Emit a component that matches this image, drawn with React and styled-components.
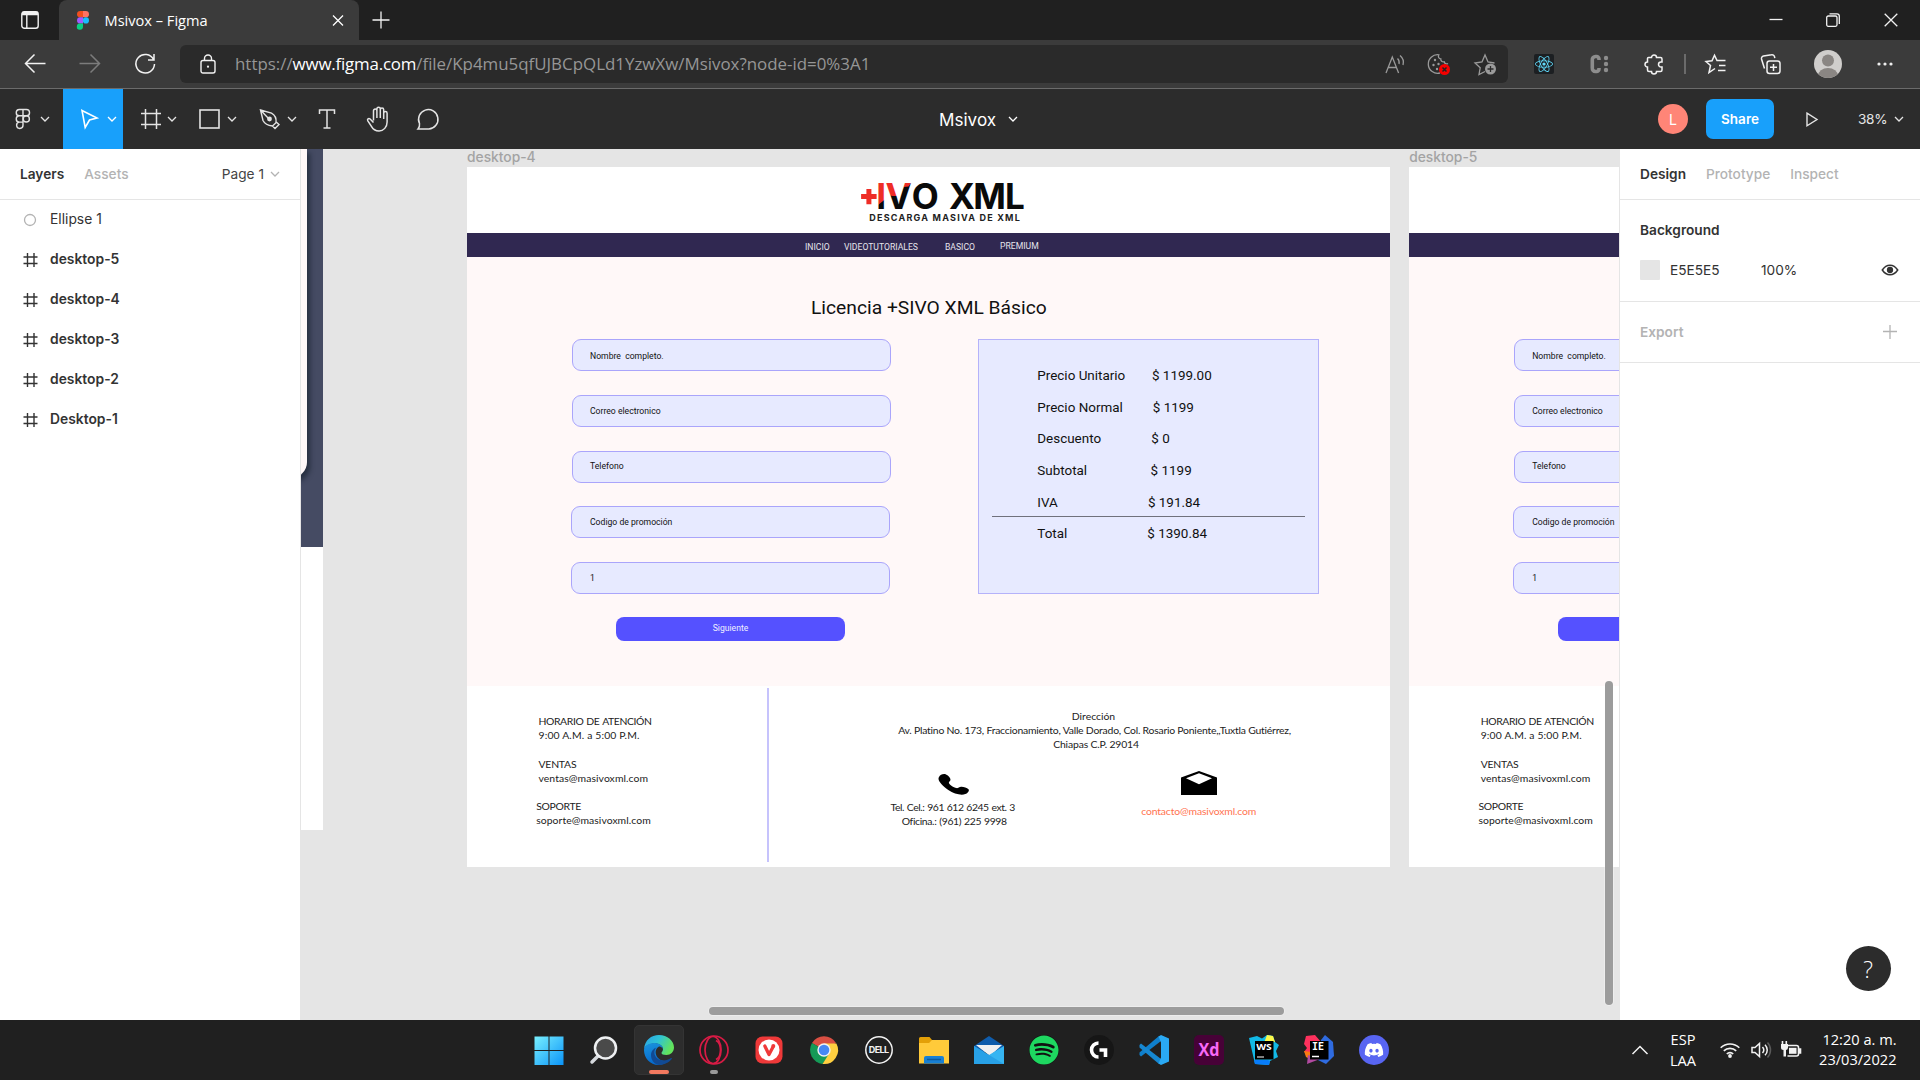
import React from "react";
import styled, { createGlobalStyle } from "styled-components";
import { FaSpotify, FaDiscord, FaReact } from "react-icons/fa";

const UI = `"Open Sans", "Noto Sans", sans-serif`;
const INTER = `Inter, "Liberation Sans", sans-serif`;

const Global = createGlobalStyle`
  * { box-sizing: border-box; }
  html, body { margin: 0; padding: 0; background: #202020; overflow: hidden; }
  svg { display: block; flex: none; overflow: visible; }
`;

const Screen = styled.div`
  width: 1920px;
  height: 1080px;
  display: flex;
  flex-direction: column;
  overflow: hidden;
  font-family: ${INTER};
`;

/* ---------- browser chrome ---------- */
const TitleBar = styled.header`
  height: 40px;
  flex: none;
  display: flex;
  padding-right: 1px;
  background: #202020;
`;
const Slot = styled.div`
  width: ${(p) => p.$w}px;
  flex: none;
  display: flex;
  align-items: center;
  justify-content: center;
  color: ${(p) => p.$c || "#f2f2f2"};
`;
const Tab = styled.div`
  width: 300px;
  padding: 0 15px 0 18px;
  display: flex;
  align-items: center;
  background: #3b3b3b;
  border-radius: 8px 8px 0 0;
  color: #fff;
  font: 14.6px ${UI};
`;
const TabTitle = styled.span`
  flex: 1;
  margin: -1px 0 0 15.5px;
`;
const Spacer = styled.div`
  flex: 1;
`;
const AddressRow = styled.div`
  height: 49px;
  flex: none;
  display: flex;
  padding: 5px 0 5px;
  background: #3b3b3b;
  border-bottom: 1px solid #6b6b6b;
`;
const UrlBox = styled.div`
  width: 1328px;
  height: 38px;
  flex: none;
  display: flex;
  align-items: center;
  border-radius: 6px;
  background: #2a2a2a;
`;
const Url = styled.div`
  flex: 1;
  padding-bottom: 2px;
  color: #969696;
  font: 16.9px ${UI};
  white-space: nowrap;
  b {
    font-weight: 400;
    letter-spacing: -0.2px;
    color: #fff;
  }
`;
const Divider = styled.div`
  width: 1.5px;
  height: 20px;
  background: #6b6b6b;
`;
const ReactTile = styled.div`
  width: 20px;
  height: 20px;
  display: grid;
  place-items: center;
  border-radius: 2px;
  background: #1c1f22;
  color: #61dafb;
  font-size: 18px;
`;

/* ---------- editor toolbar ---------- */
const ToolBar = styled.div`
  height: 60px;
  flex: none;
  display: flex;
  align-items: center;
  background: #2c2c2c;
  color: #e4e4e4;
`;
const Tool = styled.div`
  width: ${(p) => p.$w || 60}px;
  height: 60px;
  padding-left: ${(p) => p.$pl ?? 15}px;
  display: flex;
  align-items: center;
  gap: 5px;
  background: ${(p) => (p.$on ? "#18a0fb" : "transparent")};
`;
const FileName = styled.div`
  width: 90px;
  margin-left: 487px;
  display: flex;
  align-items: center;
  gap: 11.5px;
  color: #fff;
  font-size: 17.1px;
`;
const UserDot = styled.div`
  width: 30px;
  height: 30px;
  display: grid;
  place-items: center;
  border-radius: 50%;
  background: #ff8577;
  color: #fff;
  font-size: 14px;
`;
const Share = styled.div`
  width: 68px;
  height: 40px;
  margin: 0 32px 0 18px;
  display: grid;
  place-items: center;
  padding-bottom: 1px;
  border-radius: 7px;
  background: #18a0fb;
  color: #fff;
  font-size: 13.5px;
  font-weight: 600;
`;
const Zoom = styled.div`
  width: 62px;
  margin-left: 40px;
  display: flex;
  align-items: center;
  gap: 7px;
  font-size: 13.6px;
  letter-spacing: -0.3px;
`;

/* ---------- workspace ---------- */
const Work = styled.main`
  height: 871px;
  flex: none;
  display: flex;
`;
const Left = styled.aside`
  width: 301px;
  flex: none;
  background: #fff;
  border-right: 1px solid #e5e5e5;
`;
const PanelTabs = styled.div`
  height: 51px;
  padding: 0 20px;
  display: flex;
  align-items: center;
  gap: 20px;
  border-bottom: 1px solid #e5e5e5;
  font-size: 13.7px;
`;
const PTab = styled.span`
  color: ${(p) => (p.$on ? "#333" : "#b3b3b3")};
  font-weight: ${(p) => (p.$on ? 600 : 500)};
`;
const PageSel = styled.span`
  margin-left: auto;
  display: flex;
  align-items: center;
  gap: 6px;
  color: #444;
`;
const Layers = styled.div`
  margin-top: -1px;
`;
const Layer = styled.div`
  height: 40px;
  padding-left: 22px;
  display: flex;
  align-items: center;
  gap: 12px;
  color: #333;
  font-size: 13.85px;
  font-weight: ${(p) => (p.$frame ? 600 : 400)};
`;
const LayerIcon = styled.span`
  width: 16px;
  display: flex;
  justify-content: center;
  padding-top: 1px;
`;
const Canvas = styled.section`
  position: relative;
  width: 1318px;
  flex: none;
  overflow: hidden;
  background: #e5e5e5;
`;
const Right = styled.aside`
  position: relative;
  flex: 1;
  background: #fff;
  border-left: 1px solid #e5e5e5;
`;
const Section = styled.div`
  height: ${(p) => p.$h}px;
  padding: 0 ${(p) => (p.$dim ? 24 : 22)}px ${(p) => (p.$dim ? 0 : 1)}px 20px;
  display: flex;
  flex-direction: column;
  justify-content: center;
  gap: 20px;
  border-bottom: 1px solid #e5e5e5;
  font-size: 13.7px;
`;
const PropRow = styled.div`
  height: 20px;
  display: flex;
  align-items: center;
  color: #333;
`;
const SectionName = styled.span`
  flex: 1;
  font-weight: 600;
  color: ${(p) => (p.$dim ? "#b3b3b3" : "#333")};
`;
const Swatch = styled.span`
  width: 20px;
  height: 20px;
  margin-right: 10px;
  border-radius: 1px;
  background: #e5e5e5;
`;
const Value = styled.span`
  width: ${(p) => p.$w}px;
`;
const Help = styled.div`
  position: absolute;
  right: 30.5px;
  bottom: 29px;
  width: 45px;
  height: 45px;
  display: grid;
  place-items: center;
  border-radius: 50%;
  background: #2c2c2c;
  color: #fff;
  font: 300 23px ${UI};
`;

/* ---------- canvas content ---------- */
const Frame = styled.div`
  position: absolute;
  left: ${(p) => p.$x}px;
  top: 0;
  width: 923px;
`;
const FrameLabel = styled.div`
  height: 18px;
  line-height: 16px;
  color: #a3a3a3;
  font-size: 13.8px;
  font-weight: 500;
`;
const Board = styled.div`
  height: 700px;
  background: #fff;
  color: #111;
  font-family: Roboto, sans-serif;
`;
const BoardHead = styled.div`
  height: 65.5px;
  padding: 11px 0 0 388px;
`;
const BoardNav = styled.div`
  height: 24px;
  padding-left: 338px;
  display: grid;
  grid-template-columns: 39px 101px 55px auto;
  line-height: 28px;
  background: #302851;
  color: #e6e4ec;
  font-size: 8.65px;
`;
const NavItem = styled.span`
  margin-top: ${(p) => (p.$up ? -1 : 0)}px;
`;
const BoardBody = styled.div`
  height: 429.5px;
  padding-top: 36px;
  background: #fff8f8;
`;
const BoardTitle = styled.h1`
  margin: 0 0 16.5px 344px;
  font-size: 19.24px;
  font-weight: 400;
  line-height: 30px;
  white-space: nowrap;
`;
const Columns = styled.div`
  display: flex;
  padding-left: 105px;
`;
const Form = styled.div`
  width: 319px;
  display: flex;
  flex-direction: column;
  gap: 23.8px;
`;
const Field = styled.div`
  height: 32px;
  margin: 0 ${(p) => (p.$shift ? 1 : 0)}px 0 ${(p) => (p.$shift ? -1 : 0)}px;
  padding-left: ${(p) => (p.$shift ? 18 : 17)}px;
  line-height: ${(p) => p.$lh}px;
  background: #e7eaff;
  border: 1px solid #aaa5fb;
  border-radius: 9px;
  font-size: 8.65px;
  white-space: pre;
`;
const Next = styled.div`
  width: 229px;
  height: 24px;
  margin: -0.5px 0 0 44px;
  border-radius: 8px;
  background: #5551ff;
  color: #f0f0ff;
  font-size: 8.65px;
  line-height: 23px;
  text-align: center;
`;
const Prices = styled.div`
  width: 341px;
  height: 255.3px;
  margin-left: 87.3px;
  padding: 20px 13px;
  background: #e7eaff;
  border: 1px solid #b5b2fa;
`;
const Price = styled.div`
  height: 31.7px;
  padding-left: 45px;
  display: flex;
  line-height: 32.6px;
  font-size: 13.45px;
`;
const PriceName = styled.span`
  width: ${(p) => p.$w}px;
`;
const Rule = styled.div`
  height: 1px;
  margin: -2px 0 1px;
  background: #70717c;
`;
const BoardFoot = styled.div`
  height: 181px;
  display: flex;
  color: #222;
  font-family: Lato, sans-serif;
  font-size: 10.4px;
`;
const Hours = styled.div`
  width: 301.5px;
  height: 174px;
  margin-top: 2px;
  padding: 26px 0 0 71.5px;
  display: flex;
  flex-direction: column;
  gap: 13.7px;
  border-right: 2px solid #c6c3fc;
  line-height: 14.4px;
`;
const HourBlock = styled.div`
  margin-left: ${(p) => p.$dx || 0}px;
  white-space: nowrap;
`;
const Line = styled.div`
  letter-spacing: ${(p) => p.$ls || 0}px;
  word-spacing: ${(p) => p.$ws || 0}px;
  padding-left: ${(p) => p.$pl || 0}px;
  padding-right: ${(p) => p.$pr || 0}px;
  white-space: nowrap;
`;
const Where = styled.div`
  width: 621px;
  padding-top: 22.5px;
  line-height: 14px;
  text-align: center;
`;
const Address = styled.div`
  width: 434px;
  margin-left: 109px;
`;
const Contacts = styled.div`
  margin: 20.5px 0 0 95.2px;
  display: flex;
  gap: 65px;
`;
const Contact = styled.div`
  width: 180px;
  display: flex;
  flex-direction: column;
  align-items: center;
  gap: ${(p) => p.$gap}px;
  padding-top: ${(p) => p.$pt || 0}px;
  color: ${(p) => p.$c || "inherit"};
`;
const OldFrame = styled.div`
  position: absolute;
  left: -600px;
  top: 0;
  width: 622px;
  height: 681px;
  background: #fff;
`;
const OldHero = styled.div`
  height: 397.5px;
  padding-right: 16px;
  background: #454b63;
`;
const OldCard = styled.div`
  height: 329px;
  background: #fff8f8;
  border-radius: 0 0 16px 0;
  box-shadow: 3px 4px 5px rgba(10, 20, 30, 0.5);
`;
const ScrollThumb = styled.div`
  position: absolute;
  left: ${(p) => p.$x}px;
  top: ${(p) => p.$y}px;
  width: ${(p) => p.$w}px;
  height: ${(p) => p.$h}px;
  border-radius: 4px;
  background: #9c9c9c;
  box-shadow: 0 0 0 1px rgba(255, 255, 255, 0.3);
`;

/* ---------- taskbar ---------- */
const TaskBar = styled.footer`
  height: 60px;
  flex: none;
  display: flex;
  align-items: center;
  padding-left: 521px;
  background: #202020;
  color: #fff;
  font: 14.6px ${UI};
`;
const AppCell = styled.div`
  width: 55px;
  height: 50px;
  flex: none;
  display: flex;
  justify-content: center;
`;
const AppTile = styled.div`
  width: 50px;
  height: 50px;
  display: flex;
  flex-direction: column;
  align-items: center;
  padding-top: 9px;
  gap: 5px;
  border-radius: 5px;
  border: 1px solid ${(p) => (p.$on ? "#343434" : "transparent")};
  background: ${(p) => (p.$on ? "#2d2d2d" : "transparent")};
`;
const Running = styled.div`
  width: ${(p) => p.$w}px;
  height: 4px;
  border-radius: 2px;
  background: ${(p) => p.$c};
`;
const Lang = styled.div`
  width: 40px;
  padding-bottom: 1px;
  text-align: center;
  line-height: 20.5px;
`;
const Clock = styled.div`
  padding: 0 23.5px 2px 0;
  text-align: right;
  line-height: 20px;
`;
const ClockCell = styled.div`
  width: 102px;
  display: flex;
  justify-content: flex-end;
  white-space: nowrap;
`;
const IconDisc = styled.span`
  display: flex;
  color: ${(p) => p.$c};
  font-size: 30px;
  border-radius: 50%;
  background: ${(p) => p.$bg};
`;
const DiscordDisc = styled.span`
  width: 30px;
  height: 30px;
  display: grid;
  place-items: center;
  border-radius: 50%;
  background: #5865f2;
  color: #fff;
  font-size: 20px;
`;

/* ---------- icons ---------- */
const Ic = ({ w = 20, h = w, vb, sw = 1.3, children, ...r }) => (
  <svg width={w} height={h} viewBox={vb || `0 0 ${w} ${h}`} fill="none" stroke="currentColor" strokeWidth={sw} {...r}>
    {children}
  </svg>
);
const Chevron = ({ c = "currentColor" }) => (
  <Ic w={10} h={10} stroke={c}>
    <path d="M1 3l4 4 4-4" />
  </Ic>
);
const FigmaColor = () => (
  <Ic w={12} h={19} stroke="none">
    <path d="M3.2 0H6v6.3H3.2a3.15 3.15 0 010-6.3z" fill="#f24e1e" />
    <path d="M6 0h2.8a3.15 3.15 0 010 6.3H6z" fill="#ff7262" />
    <path d="M3.2 6.3H6v6.3H3.2a3.15 3.15 0 010-6.3z" fill="#a259ff" />
    <circle cx="8.9" cy="9.45" r="3.1" fill="#1abcfe" />
    <path d="M3.2 12.6H6v3.2a3.1 3.1 0 11-2.8-3.2z" fill="#0acf83" />
  </Ic>
);
const FigmaOutline = () => (
  <Ic w={24} sw={1.4}>
    <path d="M12 2.5H8.4a3.1 3.1 0 000 6.3H12zM12 2.5h3.4a3.1 3.1 0 010 6.3H12M12 8.8H8.4a3.1 3.1 0 000 6.3H12zM12 15.1H8.4a3.2 3.2 0 103.6 3.2z" />
    <circle cx="15.3" cy="11.9" r="3.1" />
  </Ic>
);
const Hash = () => (
  <Ic w={14} sw={1.4}>
    <path d="M4.500 0v14M11 0v14M.5 4h14M.5 10.500h14" />
  </Ic>
);

const Logo = ({ id }) => (
  <svg width="175" height="48" viewBox="855 178 175 48">
    <defs>
      <pattern id={id} patternUnits="userSpaceOnUse" x="855" y="178" width="175" height="48">
        <rect width="175" height="48" fill="#0a0a0a" />
        <path d="M20 0h10.500v21L20 29.500zM30.500 0h29l-6 8.500-5 .5-7 9-4 0-8-2z" fill="#ee2d26" />
      </pattern>
    </defs>
    <g fontFamily="Inter, sans-serif" fontWeight="700" fontSize="35" fill={`url(#${id})`}>
      <text x="876.200 885.500 911.800" y="208.700">IVO</text>
      <text x="949 973.300 1005" y="208.700">XML</text>
    </g>
    <path d="M866.4 189h5v5.1h5.2v4.9h-5.2v5.2h-5v-5.2h-5.3v-4.9h5.3z" fill="#ee2d26" />
    <text x="869.3" y="220.6" fontFamily="Inter, sans-serif" fontSize="9" fontWeight="700" fill="#222" textLength="150.5">
      DESCARGA MASIVA DE XML
    </text>
  </svg>
);

const fields = [
  ["Nombre  completo.", 32],
  ["Correo electronico", 31],
  ["Telefono", 29.500],
  ["Codigo de promoción", 30.500],
  ["1", 31],
];
const prices = [
  ["Precio Unitario", "$ 1199.00", 114.7],
  ["Precio Normal", "$ 1199", 115.5],
  ["Descuento", "$ 0", 114],
  ["Subtotal", "$ 1199", 113.3],
  ["IVA", "$ 191.84", 110.6],
  ["Total", "$ 1390.84", 110],
];

const ArtBoard = ({ x, name }) => (
  <Frame $x={x}>
    <FrameLabel>{name}</FrameLabel>
    <Board>
      <BoardHead>
        <Logo id={`logo-${name}`} />
      </BoardHead>
      <BoardNav>
        <NavItem>INICIO</NavItem>
        <NavItem>VIDEOTUTORIALES</NavItem>
        <NavItem>BASICO</NavItem>
        <NavItem $up>PREMIUM</NavItem>
      </BoardNav>
      <BoardBody>
        <BoardTitle>Licencia +SIVO XML Básico</BoardTitle>
        <Columns>
          <Form>
            {fields.map(([label, lh], i) => (
              <Field key={label} $shift={i > 2} $lh={lh}>
                {label}
              </Field>
            ))}
            <Next>Siguiente</Next>
          </Form>
          <Prices>
            {prices.map(([n, v, w], i) => (
              <React.Fragment key={n}>
                {i === 5 && <Rule />}
                <Price>
                  <PriceName $w={w}>{n}</PriceName>
                  {v}
                </Price>
              </React.Fragment>
            ))}
          </Prices>
        </Columns>
      </BoardBody>
      <BoardFoot>
        <Hours>
          <HourBlock>
            <Line $ls={-0.38} $ws={0.7}>HORARIO DE ATENCIÓN</Line>
            <Line $ls={0.14}>9:00 A.M. a 5:00 P.M.</Line>
          </HourBlock>
          <HourBlock>
            <Line $ls={-0.2}>VENTAS</Line>
            <Line $ls={0.08}>ventas@masivoxml.com</Line>
          </HourBlock>
          <HourBlock $dx={-2.3}>
            <Line $ls={-0.3}>SOPORTE</Line>
            <Line $ls={0.06}>soporte@masivoxml.com</Line>
          </HourBlock>
        </Hours>
        <Where>
          <Address>
            <Line $pr={2}>Dirección</Line>
            <Line $ls={-0.22}>Av. Platino No. 173, Fraccionamiento, Valle Dorado, Col. Rosario Poniente,,Tuxtla Gutiérrez,</Line>
            <Line $pl={3} $ls={-0.15}>Chiapas C.P. 29014</Line>
          </Address>
          <Contacts>
            <Contact $gap={4.5} $pt={3}>
              <svg width="31" height="21" viewBox="0 0 31 21">
                <path d="M1 3C2 .8 5.500-.6 8 .5c2.600 1.200 4.700 3.600 4.500 5.500-.2 1.400-2 1.700-1.600 2.900.7 1.900 4.600 4.500 7.500 5.200 1.600.3 2-.9 3.800-1.200 2.700-.4 6.500.6 8.300 2.300 1.200 1.400-.7 3.900-3.200 4.900-4.200 1.500-11.300-.2-17-4.100C4.700 12.300.6 7.500.5 4.700.5 4 .7 3.500 1 3z" fill="#000" />
              </svg>
              <div>
                <Line $pr={2} $ls={-0.43} $ws={0.5}>Tel. Cel.: 961 612 6245 ext. 3</Line>
                <Line $pl={1} $ls={-0.34} $ws={0.5}>Oficina.: (961) 225 9998</Line>
              </div>
            </Contact>
            <Contact $gap={8.5} $c="#ff7350">
              <svg width="36" height="24" viewBox="0 0 36 24">
                <path fillRule="evenodd" d="M18 0l18 6.500V24H0V6.500zM18 2.200L5 7.200l13 6 13-6z" fill="#000" />
              </svg>
              <Line $ls={-0.14}>contacto@masivoxml.com</Line>
            </Contact>
          </Contacts>
        </Where>
      </BoardFoot>
    </Board>
  </Frame>
);

const Browser = () => (
  <>
    <TitleBar>
      <Slot $w={59}>
        <Ic w={18} sw={1.4}>
          <rect x=".8" y=".8" width="16.400" height="16.400" rx="2.500" />
          <path d="M1 3.200h16M1 1.800h16" strokeWidth="2" />
          <path d="M5.800 4v13" />
        </Ic>
      </Slot>
      <Tab>
        <FigmaColor />
        <TabTitle>Msivox – Figma</TabTitle>
        <Ic w={12} sw={1.3}>
          <path d="M1 1.500l10 10M11 1.500l-10 10" />
        </Ic>
      </Tab>
      <Slot $w={43}>
        <Ic w={18}>
          <path d="M9 .5v17M.5 9h17" />
        </Ic>
      </Slot>
      <Spacer />
      <Slot $w={56}>
        <Ic w={14}>
          <path d="M.5 6.500h13" />
        </Ic>
      </Slot>
      <Slot $w={58}>
        <Ic w={14}>
          <rect x=".7" y="3" width="10.300" height="10.300" rx="1.500" />
          <path d="M3.500.8h7.500a2.300 2.300 0 012.300 2.300V11" />
        </Ic>
      </Slot>
      <Slot $w={57}>
        <Ic w={14}>
          <path d="M.7.700l12.600 12.600M13.300.700L.7 13.300" />
        </Ic>
      </Slot>
    </TitleBar>
    <AddressRow>
      <Slot $w={69}>
        <Ic w={22} sw={1.5}>
          <path d="M21.500 10.500H1.500M10.500 1.500l-9 9 9 9" />
        </Ic>
      </Slot>
      <Slot $w={42} $c="#7c7c7c">
        <Ic w={22} sw={1.5}>
          <path d="M.5 10.500h20M11.500 1.500l9 9-9 9" />
        </Ic>
      </Slot>
      <Slot $w={69}>
        <Ic w={22} sw={1.5}>
          <path d="M18.500 6.500A9.300 9.300 0 1019.500 11M19 1v6h-6" />
        </Ic>
      </Slot>
      <UrlBox>
        <Slot $w={55}>
          <Ic w={16} h={20} sw={1.4}>
            <rect x="1" y="6.500" width="14" height="12.500" rx="2" />
            <path d="M4.500 6.500V4.500a3.500 3.500 0 017 0v2" />
            <circle cx="8" cy="12.700" r="1.100" fill="currentColor" stroke="none" />
          </Ic>
        </Slot>
        <Url>
          https://<b>www.figma.com</b>/file/Kp4mu5qfUJBCpQLd1YzwXw/Msivox?node-id=0%3A1
        </Url>
        <Slot $w={45} $c="#9a9a9a">
          <Ic w={20}>
            <path d="M1 19L7.300 3l6.300 16M3.300 13.500h8M12.500 4.500c1.500 1.500 2 3.500 1.500 5.500M15 1.500c3 2.500 4 6 3 9.500" />
          </Ic>
        </Slot>
        <Slot $w={44} $c="#9a9a9a">
          <Ic w={22}>
            <path d="M20 10.500c-1.500 1-3.500 0-3.700-1.700-2 .5-3.800-1-3.500-3-2 0-3-2-2-4A9.300 9.300 0 1012 20" />
            <g fill="currentColor" stroke="none">
              <circle cx="7" cy="7" r="1.200" />
              <circle cx="5.500" cy="12" r="1.200" />
              <circle cx="10.500" cy="11" r="1.200" />
              <circle cx="9" cy="16" r="1.200" />
            </g>
            <circle cx="16.500" cy="16.500" r="5.500" fill="#f50000" stroke="none" />
            <path d="M14.500 14.500l4 4M18.500 14.500l-4 4" stroke="#222" strokeWidth="1.500" />
          </Ic>
        </Slot>
        <Slot $w={47} $c="#9a9a9a">
          <Ic w={22}>
            <path d="M11 18.500l-6 3 1.200-6.700L1 10l7-1L11 2l3 7 6.500 1" />
            <circle cx="16.500" cy="16" r="5.500" fill="#9a9a9a" stroke="none" />
            <path d="M16.500 13v6M13.500 16h6" stroke="#2a2a2a" />
          </Ic>
        </Slot>
      </UrlBox>
      <Slot $w={71}>
        <ReactTile>
          <FaReact />
        </ReactTile>
      </Slot>
      <Slot $w={39} $c="#8d8d8d">
        <Ic w={20} sw={3.6}>
          <path d="M10 6V5a2.500 2.500 0 00-2.500-2.500H6.500A3.200 3.200 0 003.300 6v8a3.200 3.200 0 003.200 3.500h1A2.500 2.500 0 0010 15v-1" />
          <g fill="currentColor" stroke="none">
            <circle cx="17" cy="4" r="2.200" />
            <circle cx="17" cy="10" r="2.200" />
            <circle cx="17" cy="16" r="2.200" />
          </g>
        </Ic>
      </Slot>
      <Slot $w={11} />
      <Slot $w={50}>
        <Ic w={20} sw={1.5}>
          <path d="M4.500 3.500h3a2.500 2.500 0 015 0h4a1.500 1.500 0 011.500 1.500v3h-1a2.500 2.500 0 000 5h1V16a1.500 1.500 0 01-1.500 1.500h-4a2.500 2.500 0 01-5 0H5A1.500 1.500 0 013.500 16v-3a2.500 2.500 0 010-5V4.500a1 1 0 011-1z" />
        </Ic>
      </Slot>
      <Slot $w={12}>
        <Divider />
      </Slot>
      <Slot $w={48}>
        <Ic w={21} sw={1.5}>
          <path d="M10 14.500L4 18.500l1.500-7L1 7.500l6-.8 2.500-5.500L12 6.500h8.500M14 11.500h6.500M13 16.500h7.500" />
        </Ic>
      </Slot>
      <Slot $w={62}>
        <Ic w={21} sw={1.5}>
          <rect x="7" y="7" width="13" height="12.500" rx="2.500" />
          <path d="M13.500 10v7M10 13.300h7M4.500 14.500L1.500 5a2.500 2.500 0 012-3l8-1.300a2.500 2.500 0 013 2l.3 1.500" />
        </Ic>
      </Slot>
      <Slot $w={54}>
        <Ic w={28} stroke="none">
          <clipPath id="face">
            <circle cx="14" cy="14" r="14" />
          </clipPath>
          <g clipPath="url(#face)">
            <rect width="28" height="28" fill="#d0cecc" />
            <circle cx="14" cy="10.500" r="6" fill="#8a8683" />
            <ellipse cx="14" cy="26" rx="10" ry="8" fill="#8a8683" />
          </g>
        </Ic>
      </Slot>
      <Slot $w={60}>
        <Ic w={16} h={4} stroke="none">
          <circle cx="2" cy="2" r="1.600" fill="#eee" />
          <circle cx="8" cy="2" r="1.600" fill="#eee" />
          <circle cx="14" cy="2" r="1.600" fill="#eee" />
        </Ic>
      </Slot>
    </AddressRow>
  </>
);

const EditorBar = () => (
  <ToolBar>
    <Tool $w={63} $pl={11}>
      <FigmaOutline />
      <Chevron />
    </Tool>
    <Tool $on>
      <Ic w={24} sw={1.6} stroke="#fff">
        <path d="M4 3.500l15 7.500-7.500 2-4.300 7.500z" />
      </Ic>
      <Chevron c="#fff" />
    </Tool>
    <Tool>
      <Ic w={24} sw={1.5}>
        <path d="M7.500 2v20M18.500 2v20M3 6.500h20M3 17.500h20" />
      </Ic>
      <Chevron />
    </Tool>
    <Tool>
      <Ic w={24} sw={1.6}>
        <rect x="2" y="3" width="19" height="18" />
      </Ic>
      <Chevron />
    </Tool>
    <Tool>
      <Ic w={24} sw={1.4}>
        <path d="M2.500 3l11 3.200c3.500 2 5 6 4.500 9.500l-3.500 3.300C10 18.500 6.500 16.500 5 13.500zM2.500 3l8.500 9M14.500 19l2.500 2.500 4-4-2.800-2.500" />
        <circle cx="11.500" cy="12" r="1.700" fill="currentColor" />
      </Ic>
      <Chevron />
    </Tool>
    <Tool $w={49} $pl={12}>
      <Ic w={24} sw={1.500}>
        <path d="M12 3v18M8.500 21h7M4.500 7V3h15v4" />
      </Ic>
    </Tool>
    <Tool $w={50} $pl={13}>
      <Ic w={26} sw={1.500}>
        <path d="M8.500 14.500V4.800a1.700 1.700 0 013.400 0V12M11.900 12V3a1.700 1.700 0 013.400 0v9M15.300 12V3.800a1.700 1.700 0 013.400 0V13M18.700 13V7.200a1.700 1.700 0 013.400 0V16c0 5-3.500 9-8 9-4 0-6.300-2-8-5.200L2.700 14.600c-.6-1.300.8-2.600 2.200-1.800l3.600 3.700" />
      </Ic>
    </Tool>
    <Tool $w={50} $pl={14}>
      <Ic w={24} sw={1.500}>
        <path d="M2 22c1.300-1.500 1.800-3.500 1.500-5.500A9.700 9.700 0 1112.800 22z" />
      </Ic>
    </Tool>
    <FileName>
      Msivox <Chevron />
    </FileName>
    <Spacer />
    <UserDot>L</UserDot>
    <Share>Share</Share>
    <Ic w={12} h={15} sw={1.400}>
      <path d="M1 1.200l10 6.300-10 6.300z" />
    </Ic>
    <Zoom>
      38% <Chevron />
    </Zoom>
  </ToolBar>
);

const apps = [
  <Ic w={30} stroke="none">
    <defs>
      <linearGradient id="win" x1="0" y1="0" x2="30" y2="30" gradientUnits="userSpaceOnUse">
        <stop stopColor="#7cf3ff" />
        <stop offset="1" stopColor="#0a93f8" />
      </linearGradient>
    </defs>
    <path fill="url(#win)" d="M.5 1.500h14v13.500H.5zM15.500 1.500h14v13.500h-14zM.5 16h14v14H.5zM15.500 16h14v14h-14z" />
  </Ic>,
  <Ic w={30}>
    <path d="M3 27l7-7" stroke="#d5d9dd" strokeWidth="3.500" strokeLinecap="round" />
    <circle cx="16.500" cy="13" r="10.500" fill="#4a4a4a" stroke="#eef0f2" strokeWidth="2.500" />
  </Ic>,
  <Ic w={30} stroke="none">
    <defs>
      <linearGradient id="e1" x1="0" y1="0" x2="1" y2="0.400">
        <stop stopColor="#2b9fe6" />
        <stop offset=".5" stopColor="#2fc3d6" />
        <stop offset="1" stopColor="#62e35c" />
      </linearGradient>
      <linearGradient id="e2" x1="0" y1="0" x2="0.300" y2="1">
        <stop stopColor="#1a94de" />
        <stop offset="1" stopColor="#0668cc" />
      </linearGradient>
    </defs>
    <path d="M0 14C1 5 7 0 15 0c8.500 0 15 6 15 12.500 0 4.500-3.500 7.500-7.500 7.500-3.500 0-5-1-5-2s1.500-1.600 1.500-4c0-3-3-5.500-8-5.500C5 8.500 1 11 0 14z" fill="url(#e1)" />
    <path d="M0 15c0-4 4.500-7 10.500-7 5 0 8.500 3 8.500 6-1-2-3-2.500-4-2.500-3 1.500-4 5-3 8 1.500 5 7 7.500 12 6-3 3.500-7 4.500-9.500 4.500C6 30 0 23 0 15z" fill="url(#e2)" />
    <path d="M12.500 12.500C9.500 15 9.500 21 14 24c4 2.500 9.500 1.500 13-1 .7-.3 1 .3.700 1C25 27.500 20 30 15 30 10 29 7 25 7 20c0-3.500 2.500-6.500 5.500-7.500z" fill="#114a94" />
  </Ic>,
  <Ic w={30} sw={1.700} stroke="#d81b45">
    <circle cx="15" cy="15" r="14" />
    <ellipse cx="14" cy="15" rx="8" ry="13.500" />
    <path d="M17 5.500c6 3 6 16 0 19" />
  </Ic>,
  <Ic w={30} stroke="none">
    <rect x="1.500" y="1.500" width="27" height="27" rx="7" fill="#ef3939" />
    <circle cx="15" cy="15" r="10.500" fill="#fff" />
    <path d="M10.800 11l4.200 8.500M15 19.500l4-7.500" stroke="#ef3939" strokeWidth="3.300" strokeLinecap="round" />
    <circle cx="19.300" cy="11" r="2" fill="#ef3939" />
  </Ic>,
  <Ic w={30} stroke="none">
    <path d="M15 15L3 8A14 14 0 0127 8z" fill="#d94f43" />
    <path d="M15 15L3 8a14 14 0 0010.500 21l6-8z" fill="#159a57" />
    <path d="M15 8.500h12.400A14 14 0 0113.500 29l7-11z" fill="#ffcf40" />
    <circle cx="15" cy="15" r="6.700" fill="#f2f2f2" />
    <circle cx="15" cy="15" r="5.300" fill="#4688f4" />
  </Ic>,
  <Ic w={30}>
    <circle cx="15" cy="15" r="13.200" stroke="#f2f2f2" strokeWidth="1.500" />
    <text x="4.700" y="18.300" fontFamily="Inter, sans-serif" fontWeight="700" fontSize="9" fill="#f2f2f2" stroke="none" textLength="20.500">
      DELL
    </text>
  </Ic>,
  <Ic w={30} stroke="none">
    <path d="M0 3.500a1.500 1.500 0 011.500-1.500h9L13 5v5H0z" fill="#e3a008" />
    <path d="M0 8h10l3-3h17v23.500H0z" fill="#ffca3a" />
    <path d="M5 28.500V23a2 2 0 012-2h16a2 2 0 012 2v5.500z" fill="#1880d4" />
    <path d="M8 24.500h14" stroke="#0c5a9e" strokeWidth="1.500" />
  </Ic>,
  <Ic w={30} stroke="none">
    <path d="M0 11L15 1l15 10v6H0z" fill="#0f5cab" />
    <path d="M2 10h26L16 21z" fill="#f1f1f1" />
    <path d="M0 11l15 9 15-9v18H0z" fill="#36b5f2" />
    <path d="M0 11v18h30z" fill="#1d90de" opacity=".55" />
  </Ic>,
  <IconDisc $c="#1ed760" $bg="#111"><FaSpotify /></IconDisc>,
  <Ic w={30} stroke="none">
    <circle cx="15" cy="15" r="15" fill="#161616" />
    <path d="M14.500 8A7 7 0 0014.500 22" stroke="#fff" strokeWidth="3.600" />
    <path d="M15.500 15h6v7" stroke="#fff" strokeWidth="3.600" />
  </Ic>,
  <Ic w={30} stroke="none">
    <path d="M22 6L2 21.500.5 20v-2.500L20 1z" fill="#0f7fcb" />
    <path d="M22 24L2 8.500.5 10v2.500L20 29z" fill="#1687d1" />
    <path d="M22 0l8 3.500v23L22 30l-2.500-1.500 2.500-6v-15L19.500 1.500z" fill="#2aa9f3" />
  </Ic>,
  <Ic w={30} stroke="none">
    <rect width="30" height="30" rx="5" fill="#470137" />
    <text x="4.500" y="21" fontFamily="Open Sans, sans-serif" fontWeight="700" fontSize="17" fill="#f869f8" textLength="21" lengthAdjust="spacingAndGlyphs">Xd</text>
  </Ic>,
  <Ic w={30} stroke="none">
    <path d="M0 3l8-2 5 2.500L18 0l6 1 2 6 4 3-3 6 2 6-8 4-1 4-14-1z" fill="#12b9e6" />
    <path d="M18 0l6 1 2 6-11 1z" fill="#fcf84a" />
    <path d="M5 25h14l2 1-1 4-14-1z" fill="#087cfa" />
    <rect x="6" y="6" width="18.500" height="18.500" fill="#000" />
    <text x="7.200" y="15" fontFamily="Open Sans, sans-serif" fontWeight="700" fontSize="9.500" fill="#fff" textLength="15.500" lengthAdjust="spacingAndGlyphs">WS</text>
    <path d="M8 22h7" stroke="#aaa" strokeWidth="1.500" />
  </Ic>,
  <Ic w={30} stroke="none">
    <path d="M2 1l9-1 6 7-8 14L0 17l3-4-3-4z" fill="#fe315d" />
    <path d="M0 16l7 1-1 7-4-2z" fill="#f97a12" />
    <path d="M17 5l4-5 8 7 1 14-8 8-8-4z" fill="#2f6be0" />
    <path d="M4 20l12 4-13 5z" fill="#b24aa0" />
    <rect x="6" y="6" width="18.500" height="18.500" fill="#000" />
    <text x="8" y="15" fontFamily="DejaVu Sans Mono, monospace" fontWeight="700" fontSize="10.500" fill="#fff" textLength="12" lengthAdjust="spacingAndGlyphs">IE</text>
    <path d="M8 21.500h7" stroke="#fff" strokeWidth="1.500" />
  </Ic>,
  <DiscordDisc><FaDiscord /></DiscordDisc>,
];

const Dock = () => (
  <TaskBar>
    {apps.map((icon, i) => (
      <AppCell key={i}>
        <AppTile $on={i === 2}>
          {icon}
          {i === 2 && <Running $w={20} $c="#f3795f" />}
          {i === 3 && <Running $w={8} $c="#9a9a9a" />}
        </AppTile>
      </AppCell>
    ))}
    <Spacer />
    <Slot $w={46}>
      <Ic w={16} h={10} sw={1.500}>
        <path d="M.5 9L8 1.500 15.500 9" />
      </Ic>
    </Slot>
    <Lang>
      ESP
      <br />
      LAA
    </Lang>
    <Slot $w={54}>
      <Ic w={20} h={16} sw={1.600}>
        <path d="M.7 5.800a13.200 13.200 0 0118.600 0M3.800 8.900a8.800 8.800 0 0112.400 0M6.800 12a4.500 4.500 0 016.400 0" />
        <circle cx="10" cy="14" r="1.900" fill="currentColor" stroke="none" />
      </Ic>
    </Slot>
    <Slot $w={7}>
      <Ic w={20} h={16} sw={1.500}>
        <path d="M1 5.500h3L8.500 1.500v13L4 10.500H1zM11.500 5c1.500 1.700 1.500 4.300 0 6M14 2.700c3 3 3 7.600 0 10.600" />
        <path d="M16.500.5c4 4.300 4 10.700 0 15" stroke="#5a5a5a" />
      </Ic>
    </Slot>
    <Slot $w={54}>
      <Ic w={20} h={18} sw={1.600}>
        <path d="M7 4.500h8.500a2 2 0 012 2v6.500a2 2 0 01-2 2H6.500M18 8v4h1.500V8z" />
        <rect x="8" y="6.800" width="7.500" height="6" fill="currentColor" stroke="none" />
        <path d="M0 3h7v3.500a2.500 2.500 0 01-2 2.500v6.500H2.500V9A2.500 2.500 0 010 6.500z" fill="currentColor" stroke="none" />
        <path d="M1.500 0v3.500M5.300 0v3.500" />
      </Ic>
    </Slot>
    <ClockCell>
      <Clock>
        12:20 a. m.
        <br />
        23/03/2022
      </Clock>
    </ClockCell>
  </TaskBar>
);

export default function App() {
  return (
    <Screen>
      <Global />
      <Browser />
      <EditorBar />
      <Work>
        <Left>
          <PanelTabs>
            <PTab $on>Layers</PTab>
            <PTab>Assets</PTab>
            <PageSel>
              Page 1 <Chevron c="#b3b3b3" />
            </PageSel>
          </PanelTabs>
          <Layers>
            <Layer>
              <LayerIcon>
                <Ic w={16} stroke="#b3b3b3">
                  <circle cx="8" cy="8" r="5.500" />
                </Ic>
              </LayerIcon>
              Ellipse 1
            </Layer>
            {["desktop-5", "desktop-4", "desktop-3", "desktop-2", "Desktop-1"].map((n) => (
              <Layer key={n} $frame>
                <LayerIcon>
                  <Hash />
                </LayerIcon>
                {n}
              </Layer>
            ))}
          </Layers>
        </Left>
        <Canvas>
          <OldFrame>
            <OldHero>
              <OldCard />
            </OldHero>
          </OldFrame>
          <ArtBoard x={166} name="desktop-4" />
          <ArtBoard x={1108.2} name="desktop-5" />
          <ScrollThumb $x={1304} $y={532} $w={8} $h={324} />
          <ScrollThumb $x={408} $y={858} $w={575} $h={8} />
        </Canvas>
        <Right>
          <PanelTabs>
            <PTab $on>Design</PTab>
            <PTab>Prototype</PTab>
            <PTab>Inspect</PTab>
          </PanelTabs>
          <Section $h={102}>
            <PropRow>
              <SectionName>Background</SectionName>
            </PropRow>
            <PropRow>
              <Swatch />
              <Value $w={91}>E5E5E5</Value>
              <Value $w={120}>100%</Value>
              <Ic w={18} h={12} sw={1.500}>
                <path d="M1.300 6C3.500 2.600 6 1.200 9 1.200S14.500 2.600 16.700 6C14.500 9.400 12 10.800 9 10.800S3.500 9.400 1.300 6z" />
                <circle cx="9" cy="6" r="2.400" fill="currentColor" />
              </Ic>
            </PropRow>
          </Section>
          <Section $h={61} $dim>
            <PropRow>
              <SectionName $dim>Export</SectionName>
              <Ic w={14} stroke="#b3b3b3">
                <path d="M7 0v14M0 6.500h14" />
              </Ic>
            </PropRow>
          </Section>
          <Help>?</Help>
        </Right>
      </Work>
      <Dock />
    </Screen>
  );
}
